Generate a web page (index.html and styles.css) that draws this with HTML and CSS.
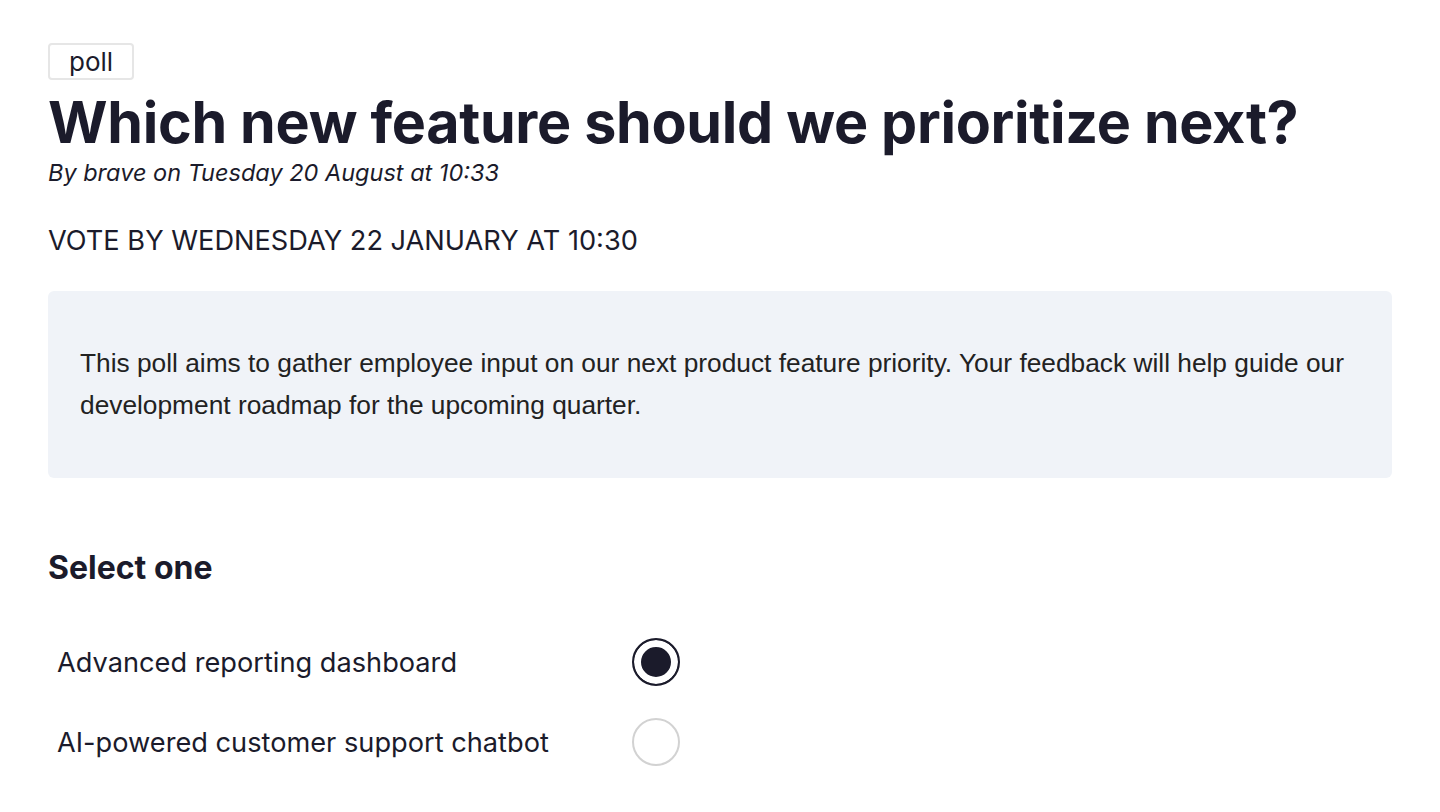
FILE: index.html
```html
<!DOCTYPE html>
<html>
<head>
<meta charset="utf-8">
<link rel="stylesheet" href="styles.css">
</head>
<body>
<main class="page">
  <div class="tagrow"><span class="tag">poll</span></div>
  <h1 class="title">Which new feature should we prioritize next?</h1>
  <p class="byline">By brave on Tuesday 20 August at 10:33</p>
  <p class="deadline">VOTE BY WEDNESDAY 22 JANUARY AT 10:30</p>
  <div class="desc">
    <p>This poll aims to gather employee input on our next product feature priority. Your feedback will help guide our development roadmap for the upcoming quarter.</p>
  </div>
  <h2 class="select">Select one</h2>
  <ul class="options">
    <li class="option"><span class="label">Advanced reporting dashboard</span><span class="radio checked"></span></li>
    <li class="option"><span class="label">AI-powered customer support chatbot</span><span class="radio"></span></li>
  </ul>
</main>
</body>
</html>
```
FILE: styles.css
```css
* { box-sizing: border-box; }
html, body { margin: 0; padding: 0; background: #fff; }
body { font-family: Inter, "Noto Sans", sans-serif; color: #1b1b2b; }
.page { padding: 43px 48px 0 48px; }
.tagrow { display: flex; }
.tag {
  display: block;
  border: 2px solid #e6e6e6;
  border-radius: 4px;
  font-size: 26px;
  line-height: 33px;
  padding: 0 19px;
}
.title {
  margin: 2px 0 0;
  font-size: 57.4px;
  font-weight: 700;
  line-height: 80px;
  letter-spacing: -0.3px;
}
.byline {
  margin: -4px 0 0;
  font-size: 23.5px;
  font-style: italic;
  line-height: 30px;
}
.deadline {
  margin: 36px 0 0;
  font-size: 27.2px;
  line-height: 34px;
}
.desc {
  margin-top: 33px;
  background: #f0f3f8;
  border-radius: 6px;
  padding: 51px 32px 52px;
}
.desc p {
  margin: 0;
  font-family: "Liberation Sans", Arial, sans-serif;
  font-size: 26.3px;
  line-height: 42px;
  color: #222;
}
.select {
  margin: 71px 0 0;
  font-size: 32px;
  font-weight: 700;
  line-height: 38px;
}
.options { list-style: none; margin: 50px 0 0; padding: 0; }
.option {
  display: flex;
  align-items: center;
  height: 80px;
}
.option:first-child { margin-top: -15px; }
.label {
  width: 584px;
  padding-left: 9px;
  font-size: 27.2px;
}
.radio {
  width: 48px;
  height: 48px;
  border-radius: 50%;
  border: 2px solid #d2d2d2;
  background: #fff;
}
.radio.checked {
  border-color: #1b1b2b;
  box-shadow: inset 0 0 0 7px #fff;
  background: #1b1b2b;
}
```
